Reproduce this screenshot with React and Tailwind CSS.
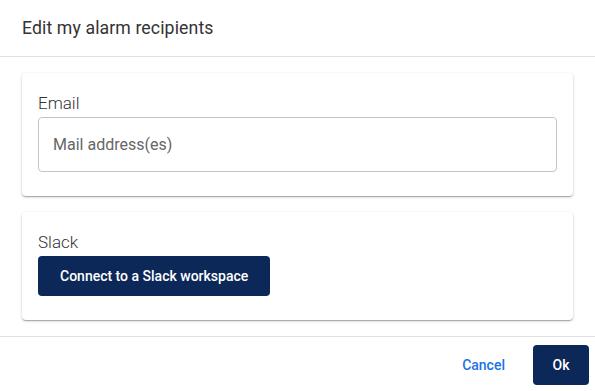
export default function App() {
  return (
    <div className="w-[595px] h-[391px] bg-white flex flex-col font-['Roboto',sans-serif] text-[#333]">
      <div className="h-[57px] shrink-0 flex items-center px-[22px] border-b border-[#e0e0e0]">
        <h2 className="text-[17.7px] text-[#333] tracking-[0.1px]">Edit my alarm recipients</h2>
      </div>

      <div className="flex flex-col gap-4 px-[22px] pt-4 pb-4 border-b border-[#e0e0e0]">
        <div className="rounded-[4px] bg-white px-4 pt-[18px] pb-6 shadow-[0_1px_3px_rgba(0,0,0,0.2),0_1px_1px_rgba(0,0,0,0.14),0_2px_1px_-1px_rgba(0,0,0,0.12)]">
          <div className="text-[17px] leading-6 font-light text-[#333]">Email</div>
          <input
            placeholder="Mail address(es)"
            className="mt-[2px] w-full h-[55px] rounded-[4px] border border-[#c4c4c4] px-[14px] text-[16px] text-[#333] placeholder:text-[#666] outline-none"
          />
        </div>

        <div className="rounded-[4px] bg-white px-4 pt-[18px] pb-6 shadow-[0_1px_3px_rgba(0,0,0,0.2),0_1px_1px_rgba(0,0,0,0.14),0_2px_1px_-1px_rgba(0,0,0,0.12)]">
          <div className="text-[17px] leading-6 font-light text-[#333]">Slack</div>
          <button className="mt-[2px] h-[40px] px-[22px] rounded-[4px] bg-[#0b2858] text-white text-[14px] font-medium">
            Connect to a Slack workspace
          </button>
        </div>
      </div>

      <div className="flex items-center justify-end gap-[12px] pt-[8px] pr-[6px]">
        <button className="h-[40px] px-4 text-[14px] font-medium text-[#1a73e8]">Cancel</button>
        <button className="h-[40px] w-[56px] rounded-[4px] bg-[#0b2858] text-white text-[14px] font-medium">Ok</button>
      </div>
    </div>
  );
}
